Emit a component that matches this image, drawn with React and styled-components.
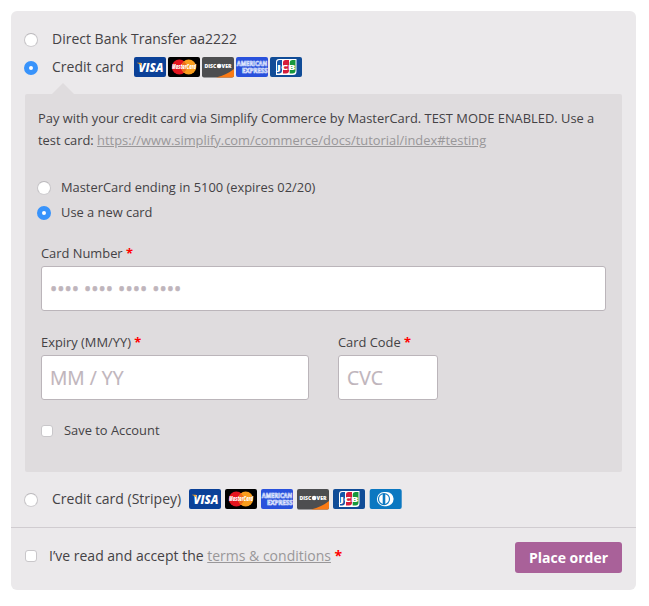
import React from "react";
import styled, { createGlobalStyle, css } from "styled-components";

const GlobalStyle = createGlobalStyle`
  * { box-sizing: border-box; }
  body {
    margin: 0;
    background: #fff;
    font-family: "Open Sans", sans-serif;
    color: #444245;
  }
`;

const Panel = styled.form`
  width: 625px;
  height: 579px;
  margin: 11px 0 0 11px;
  background: #ebe9eb;
  border-radius: 6px;
`;

const Methods = styled.div`
  height: 517px;
  padding: 14px 14px 0;
  border-bottom: 1px solid #d0ccd0;
`;

const Method = styled.label`
  display: flex;
  align-items: center;
  height: 28px;
  font-size: 14px;
  white-space: nowrap;
`;

const LabelText = styled.span`
  padding-bottom: 2px;
`;

const control = css`
  appearance: none;
  flex: none;
  margin: 0;
  background: #fff;
  border: 1px solid #c9c7ca;
`;

const Radio = styled.input.attrs({ type: "radio" })`
  ${control}
  width: 14px;
  height: 14px;
  margin: 2px 14px 0 -1px;
  border-color: #b9b7ba #c6c4c7 #cfcdd0;
  border-radius: 50%;
  &:checked {
    border: 5px solid #3893fb;
  }
`;

const Checkbox = styled.input.attrs({ type: "checkbox" })`
  ${control}
  width: 12px;
  height: 12px;
  border-radius: 3px;
`;

const CardList = styled.span`
  display: flex;
  gap: ${(p) => p.$gap};
  margin-left: ${(p) => p.$offset};
`;

const CardIcon = styled.svg`
  display: block;
  width: 32px;
  height: 20px;
  overflow: visible;
  font-family: "Open Sans", sans-serif;
`;

const Details = styled.section`
  position: relative;
  height: 378px;
  margin: 13px 0;
  padding: 13px;
  background: #dfdcde;
  border-radius: 2px;
  font-size: 12.88px;
  &::before {
    content: "";
    position: absolute;
    top: -11px;
    left: 27px;
    border: 11px solid transparent;
    border-top: 0;
    border-bottom-color: #dfdcde;
  }
`;

const Intro = styled.p`
  margin: 0 0 24px;
  line-height: 22px;
  white-space: nowrap;
`;

const Link = styled.a`
  color: #999799;
  text-decoration: underline;
`;

const SavedCard = styled.label`
  display: flex;
  align-items: center;
  height: 25px;
  ${Radio} { margin: 1px 10px 0 -1px; }
`;

const Fields = styled.div`
  display: flex;
  gap: 29px;
  margin: ${(p) => p.$top} 3px 0;
`;

const Field = styled.label`
  display: flex;
  flex-direction: column;
  width: ${(p) => p.$width};
  line-height: 26px;
  white-space: nowrap;
`;

const Required = styled.b`
  color: #f00;
`;

const Input = styled.input`
  width: 100%;
  height: 45px;
  padding: 0 8px;
  border: 1px solid #bbb5ba;
  border-radius: 3px;
  background: #fff;
  font: 19.32px "Open Sans", sans-serif;
  -webkit-text-stroke: ${(p) => p.$stroke || "0.2px"} #bfb5bc;
  &::placeholder { color: #bfb5bc; opacity: 1; }
`;

const SaveRow = styled.label`
  display: flex;
  align-items: center;
  gap: 11px;
  height: 20px;
  margin: 20px 3px 0;
  ${Checkbox} { margin-top: 1px; }
`;

const Footer = styled.div`
  display: flex;
  justify-content: space-between;
  padding: 14px 14px 0;
`;

const Terms = styled.label`
  display: flex;
  align-items: center;
  gap: 12px;
  height: 28px;
  font-size: 14px;
  white-space: nowrap;
`;

const OrderButton = styled.button`
  width: 107px;
  height: 31px;
  padding: 0;
  border: 0;
  border-radius: 3px;
  background: #a96199;
  color: #fff;
  font: 700 14px "Open Sans", sans-serif;
`;

const Visa = () => (
  <CardIcon viewBox="0 0 32 20" aria-label="Visa">
    <rect width="32" height="20" rx="2" fill="#0b4198" />
    <text x="4.500" y="14.500" textLength="25" lengthAdjust="spacingAndGlyphs" fontSize="12" fontWeight="800" fontStyle="italic" fill="#fff">VISA</text>
    <path d="M3 5.800h3.700l1.400 4.100C6.700 7.700 5.200 6.600 3 6.100z" fill="#f7a51c" />
  </CardIcon>
);

const MasterCard = () => (
  <CardIcon viewBox="0 0 32 20" aria-label="MasterCard">
    <rect width="32" height="20" rx="2" fill="#000" />
    <circle cx="11.300" cy="10" r="7.500" fill="#e4151f" />
    <circle cx="20.700" cy="10" r="7.500" fill="#f99d1c" />
    <path d="M16 4.200a7.500 7.500 0 0 1 0 11.600a7.500 7.500 0 0 1 0-11.600" fill="#ee6a1d" />
    <text x="4" y="12.400" textLength="24" lengthAdjust="spacingAndGlyphs" fontSize="6.500" fontWeight="800" fontStyle="italic" fill="#fff">MasterCard</text>
  </CardIcon>
);

const Discover = () => (
  <CardIcon viewBox="0 0 32 20" aria-label="Discover">
    <rect width="32" height="20.500" rx="2" fill="#4d4e50" />
    <path d="M14 20.500Q25 17.700 32 12v6.500a2 2 0 0 1-2 2z" fill="#fa7a14" />
    <text x="2.500" y="11" textLength="12" lengthAdjust="spacingAndGlyphs" fontSize="5.500" fontWeight="800" fill="#fff">DISC</text>
    <circle cx="17.100" cy="9" r="2.300" fill="#fff" />
    <text x="19.600" y="11" textLength="10" lengthAdjust="spacingAndGlyphs" fontSize="5.500" fontWeight="800" fill="#fff">VER</text>
  </CardIcon>
);

const Amex = () => (
  <CardIcon viewBox="0 0 32 20" aria-label="American Express">
    <rect width="32" height="20" rx="2" fill="#2951dc" />
    <g fill="#4a6ee4" stroke="#e6ecff" strokeWidth=".65" fontSize="6.600" fontWeight="700">
      <text x=".7" y="9" textLength="30.500" lengthAdjust="spacingAndGlyphs">AMERICAN</text>
      <text x="6" y="15.600" textLength="25.500" lengthAdjust="spacingAndGlyphs">EXPRESS</text>
    </g>
  </CardIcon>
);

const Jcb = () => (
  <CardIcon viewBox="0 0 32 20" aria-label="JCB">
    <rect width="32" height="20" rx="2" fill="#104c97" />
    <path d="M9 2h17.500v12.500a3.500 3.500 0 0 1-3.500 3.500H6V5a3 3 0 0 1 3-3z" fill="#fff" />
    <path d="M9.500 3H12v10.500a3 3 0 0 1-3 3H7V5.500A2.500 2.500 0 0 1 9.500 3z" fill="#1557a8" />
    <path d="M15.500 3H19v10.500a3 3 0 0 1-3 3h-3V5.500A2.500 2.500 0 0 1 15.500 3z" fill="#d51e3c" />
    <path d="M22.300 3h3.200v10.500a3 3 0 0 1-3 3h-2.800V5.500A2.500 2.500 0 0 1 22.300 3z" fill="#16983c" />
    <text x="7" y="12.500" textLength="18.500" lengthAdjust="spacingAndGlyphs" fontSize="7.500" fontWeight="800" fill="#fff">JCB</text>
  </CardIcon>
);

const Diners = () => (
  <CardIcon viewBox="0 0 32 20" aria-label="Diners Club">
    <rect x=".7" width="32" height="20" rx="2" fill="#0b78c1" />
    <path d="M15 3h2.500a7.100 7.100 0 0 1 0 14.200H15A7.100 7.100 0 0 1 15 3z" fill="#fff" />
    <circle cx="15" cy="10.100" r="6.100" fill="#0b78c1" />
    <path d="M13.700 5.300a5 5 0 0 0 0 9.600zM16.300 5.300a5 5 0 0 1 0 9.600z" fill="#fff" />
  </CardIcon>
);

export default function App() {
  return (
    <>
      <GlobalStyle />
      <Panel onSubmit={(e) => e.preventDefault()}>
        <Methods>
          <Method>
            <Radio name="method" />
            <LabelText>Direct Bank Transfer aa2222</LabelText>
          </Method>
          <Method>
            <Radio name="method" defaultChecked />
            <LabelText>Credit card</LabelText>
            <CardList $gap="2px" $offset="10px">
              <Visa /><MasterCard /><Discover /><Amex /><Jcb />
            </CardList>
          </Method>
          <Details>
            <Intro>
              Pay with your credit card via Simplify Commerce by MasterCard. TEST MODE ENABLED. Use a
              <br />
              test card: <Link>https://www.simplify.com/commerce/docs/tutorial/index#testing</Link>
            </Intro>
            <SavedCard>
              <Radio name="card" />
              <LabelText>MasterCard ending in 5100 (expires 02/20)</LabelText>
            </SavedCard>
            <SavedCard>
              <Radio name="card" defaultChecked />
              <LabelText>Use a new card</LabelText>
            </SavedCard>
            <Fields $top="15px">
              <Field $width="565px">
                <span>Card Number <Required>*</Required></span>
                <Input $stroke="0.6px" placeholder="•••• •••• •••• ••••" />
              </Field>
            </Fields>
            <Fields $top="18px">
              <Field $width="268px">
                <span>Expiry (MM/YY) <Required>*</Required></span>
                <Input placeholder="MM / YY" />
              </Field>
              <Field $width="100px">
                <span>Card Code <Required>*</Required></span>
                <Input placeholder="CVC" />
              </Field>
            </Fields>
            <SaveRow>
              <Checkbox />
              Save to Account
            </SaveRow>
          </Details>
          <Method>
            <Radio name="method" />
            <LabelText>Credit card (Stripey)</LabelText>
            <CardList $gap="4px" $offset="8px">
              <Visa /><MasterCard /><Amex /><Discover /><Jcb /><Diners />
            </CardList>
          </Method>
        </Methods>
        <Footer>
          <Terms>
            <Checkbox />
            <LabelText>I’ve read and accept the <Link>terms &amp; conditions</Link> <Required>*</Required></LabelText>
          </Terms>
          <OrderButton>Place order</OrderButton>
        </Footer>
      </Panel>
    </>
  );
}
